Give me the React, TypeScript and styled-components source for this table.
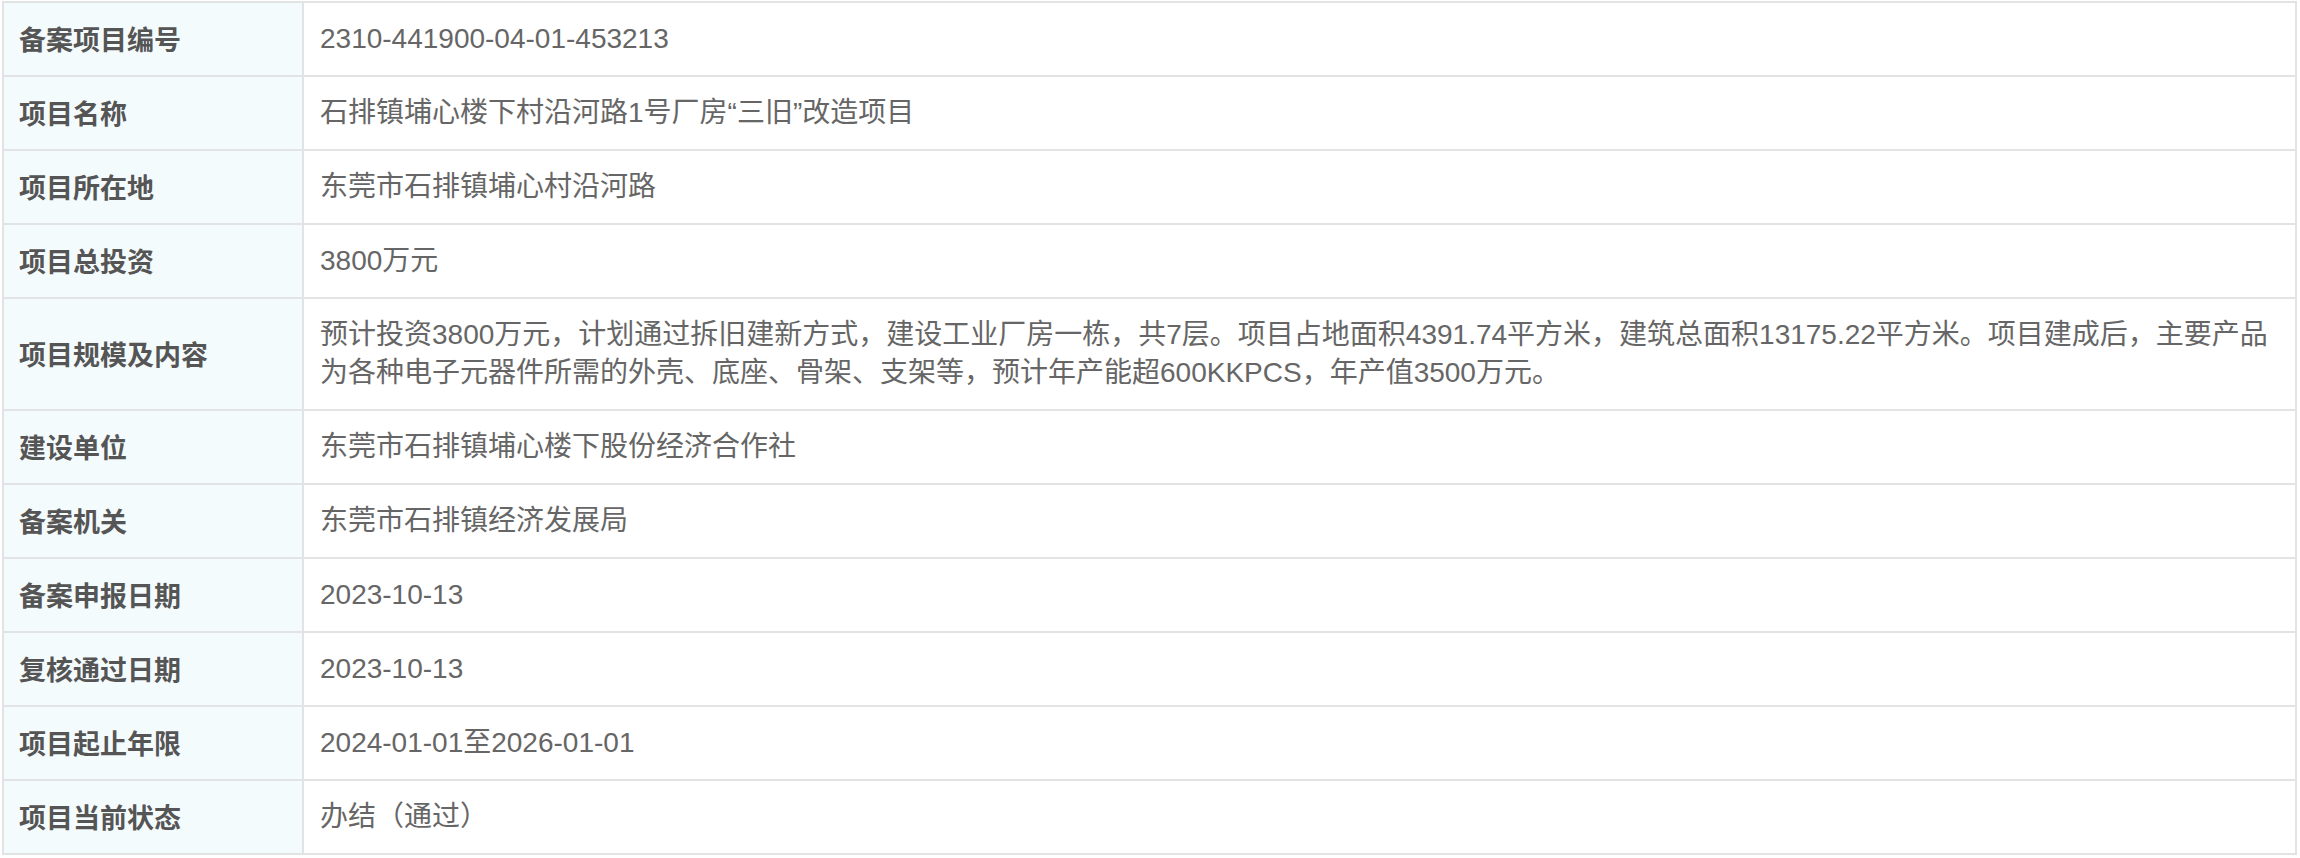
import React from "react";
import styled, { createGlobalStyle } from "styled-components";

const GlobalStyle = createGlobalStyle`
  html, body {
    margin: 0;
    padding: 0;
    background: #ffffff;
  }
  body {
    font-family: "Noto Sans CJK SC", "Noto Sans", sans-serif;
  }
`;

const Page = styled.div`
  padding: 1px 3px 0 2px;
  background: #ffffff;
`;

const Table = styled.table`
  width: 100%;
  border-collapse: collapse;
  table-layout: fixed;
  font-family: "Noto Sans CJK SC", "Noto Sans", sans-serif;
  line-height: 38px;
`;

const LabelCol = styled.col`
  width: 300px;
`;

const Row = styled.tr``;

const LabelCell = styled.th`
  border: 2px solid #e1e3e4;
  background: #f4fbfd;
  color: #555555;
  font-size: 27px;
  font-weight: 700;
  text-align: left;
  padding: 17px 15px;
  vertical-align: middle;
  white-space: nowrap;
`;

const ValueCell = styled.td`
  border: 2px solid #e1e3e4;
  background: #ffffff;
  color: #666666;
  font-family: "Liberation Sans", "Noto Sans CJK SC", sans-serif;
  font-size: 28px;
  font-weight: 400;
  text-align: left;
  padding: 17px 18px 17px 16px;
  vertical-align: middle;
  word-break: break-all;
`;

type Item = { label: string; value: string };

const items: Item[] = [
  { label: "备案项目编号", value: "2310-441900-04-01-453213" },
  { label: "项目名称", value: "石排镇埔心楼下村沿河路1号厂房“三旧”改造项目" },
  { label: "项目所在地", value: "东莞市石排镇埔心村沿河路" },
  { label: "项目总投资", value: "3800万元" },
  {
    label: "项目规模及内容",
    value:
      "预计投资3800万元，计划通过拆旧建新方式，建设工业厂房一栋，共7层。项目占地面积4391.74平方米，建筑总面积13175.22平方米。项目建成后，主要产品为各种电子元器件所需的外壳、底座、骨架、支架等，预计年产能超600KKPCS，年产值3500万元。",
  },
  { label: "建设单位", value: "东莞市石排镇埔心楼下股份经济合作社" },
  { label: "备案机关", value: "东莞市石排镇经济发展局" },
  { label: "备案申报日期", value: "2023-10-13" },
  { label: "复核通过日期", value: "2023-10-13" },
  { label: "项目起止年限", value: "2024-01-01至2026-01-01" },
  { label: "项目当前状态", value: "办结（通过）" },
];

export default function App() {
  return (
    <>
      <GlobalStyle />
      <Page>
        <Table>
          <colgroup>
            <LabelCol />
            <col />
          </colgroup>
          <tbody>
            {items.map((it) => (
              <Row key={it.label}>
                <LabelCell>{it.label}</LabelCell>
                <ValueCell>{it.value}</ValueCell>
              </Row>
            ))}
          </tbody>
        </Table>
      </Page>
    </>
  );
}
